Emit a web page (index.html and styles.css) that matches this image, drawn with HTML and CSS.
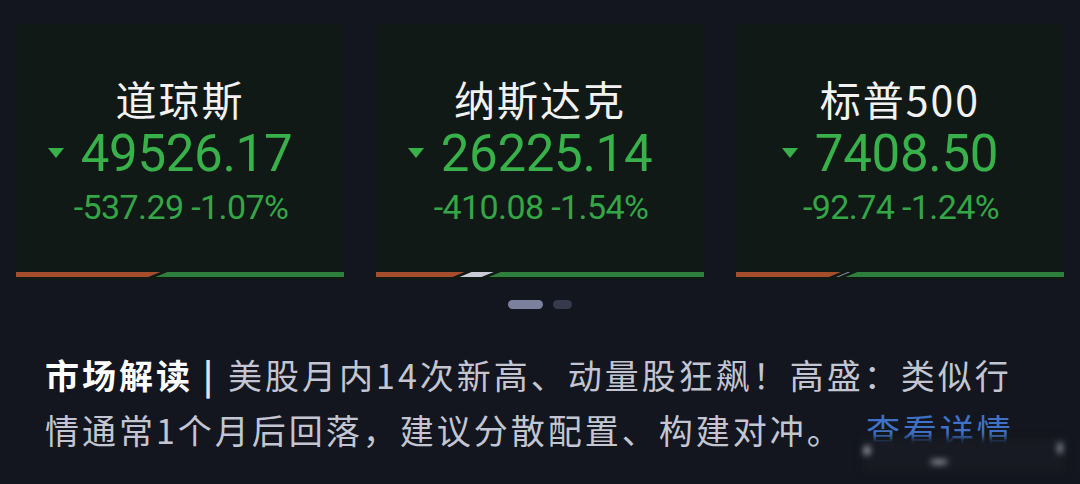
FILE: index.html
```html
<!DOCTYPE html>
<html>

<head>
    <title>行情</title>
    <link rel="stylesheet" href="styles.css">
</head>

<body>
    <div class="cards">
        <div class="card">
            <div class="card-title">道琼斯</div>
            <div class="card-price"><span class="arrow"></span>49526.17</div>
            <div class="card-change">-537.29 -1.07%</div>
            <div class="bar">
                <span class="seg down" style="flex-basis: 44%"></span>
                <span class="seg up"></span>
            </div>
        </div>
        <div class="card">
            <div class="card-title">纳斯达克</div>
            <div class="card-price"><span class="arrow"></span>26225.14</div>
            <div class="card-change">-410.08 -1.54%</div>
            <div class="bar">
                <span class="seg down" style="flex-basis: 27%"></span>
                <span class="seg flat" style="flex-basis: 11%"></span>
                <span class="seg up"></span>
            </div>
        </div>
        <div class="card">
            <div class="card-title">标普500</div>
            <div class="card-price"><span class="arrow"></span>7408.50</div>
            <div class="card-change">-92.74 -1.24%</div>
            <div class="bar">
                <span class="seg down" style="flex-basis: 32%"></span>
                <span class="seg flat thin" style="flex-basis: 5%"></span>
                <span class="seg up"></span>
            </div>
        </div>
    </div>

    <div class="dots">
        <span class="dot active"></span>
        <span class="dot"></span>
    </div>

    <div class="news">
        <p class="news-text"><b>市场解读</b><span class="sep">|</span>美股月内14次新高、动量股狂飙！高盛：类似行情通常1个月后回落，建议分散配置、构建对冲。<a class="more" href="#">查看详情</a></p>
        <div class="mark">
            <span class="smudge s1"></span>
            <span class="smudge s2"></span>
            <span class="smudge s3"></span>
        </div>
    </div>
</body>

</html>
```
FILE: styles.css
```css
body {
    margin: 0;
    width: 1080px;
    height: 484px;
    overflow: hidden;
    background-color: #13161e;
    font-family: Roboto, "Noto Sans CJK SC", sans-serif;
}

.cards {
    display: flex;
    gap: 32px;
    padding: 24px 16px 0;
}

.card {
    width: 328px;
    height: 256px;
    background-color: #111916;
    border-radius: 4px 4px 0 0;
    display: flex;
    flex-direction: column;
    align-items: center;
    position: relative;
}

.card-title {
    margin-top: 48px;
    font-family: "Noto Sans CJK SC", sans-serif;
    font-size: 41px;
    line-height: 52px;
    letter-spacing: 2px;
    color: #f2f2f2;
}

.card-price {
    display: flex;
    align-items: center;
    margin-top: 2px;
    font-size: 51px;
    line-height: 56px;
    color: #38b14b;
    letter-spacing: -0.3px;
    margin-left: -20px;
}

.arrow {
    width: 0;
    height: 0;
    border-left: 8px solid transparent;
    border-right: 8px solid transparent;
    border-top: 10px solid #38b14b;
    margin-right: 17px;
    margin-top: -2px;
}

.card-change {
    margin-top: 2px;
    font-size: 34px;
    line-height: 46px;
    color: #34a646;
    letter-spacing: -0.6px;
    margin-left: 2px;
}

/* up / down split under each card */
.bar {
    position: absolute;
    left: 0;
    right: 0;
    bottom: 3px;
    height: 5px;
    display: flex;
}

.seg {
    height: 100%;
    flex-shrink: 0;
}

.down {
    background-color: #a64e2c;
    clip-path: polygon(0 0, 100% 0, calc(100% - 12px) 100%, 0 100%);
}

.flat {
    background-color: #c9ccd4;
    margin-left: -7px;
    clip-path: polygon(14px 0, 100% 0, calc(100% - 12px) 100%, 2px 100%);
}

.flat.thin {
    background-color: #8e949c;
}

.up {
    flex: 1;
    background-color: #2e7e3c;
    margin-left: -7px;
    clip-path: polygon(14px 0, 100% 0, 100% 100%, 2px 100%);
}

.dots {
    display: flex;
    justify-content: center;
    gap: 10px;
    margin-top: 20px;
}

.dot {
    width: 19px;
    height: 9px;
    border-radius: 5px;
    background-color: #373a4b;
}

.dot.active {
    width: 35px;
    background-color: #7b809c;
}

.news {
    position: relative;
    width: 990px;
    padding: 38px 0 0 45px;
}

.news-text {
    margin: 0;
    font-family: "Noto Sans CJK SC", sans-serif;
    font-size: 34px;
    line-height: 55px;
    letter-spacing: 3px;
    color: #c3c6d2;
}

.news-text b {
    color: #ffffff;
    font-weight: 700;
}

.sep {
    color: #e2e4ea;
    font-weight: 700;
    margin: 0 12px 0 10px;
}

.more {
    color: #3f72c6;
    text-decoration: none;
    margin-left: 22px;
}

/* blurred patch in the lower right corner */
.mark {
    position: absolute;
    left: 862px;
    top: 129px;
    width: 204px;
    height: 34px;
    background-color: #171a22;
    filter: blur(3px);
}

.smudge {
    position: absolute;
    background-color: #b8bbc4;
    border-radius: 50%;
}

.s1 {
    left: 2px;
    top: 8px;
    width: 6px;
    height: 9px;
}

.s2 {
    left: 68px;
    top: 22px;
    width: 18px;
    height: 4px;
}

.s3 {
    left: 196px;
    top: 4px;
    width: 4px;
    height: 12px;
}
```
